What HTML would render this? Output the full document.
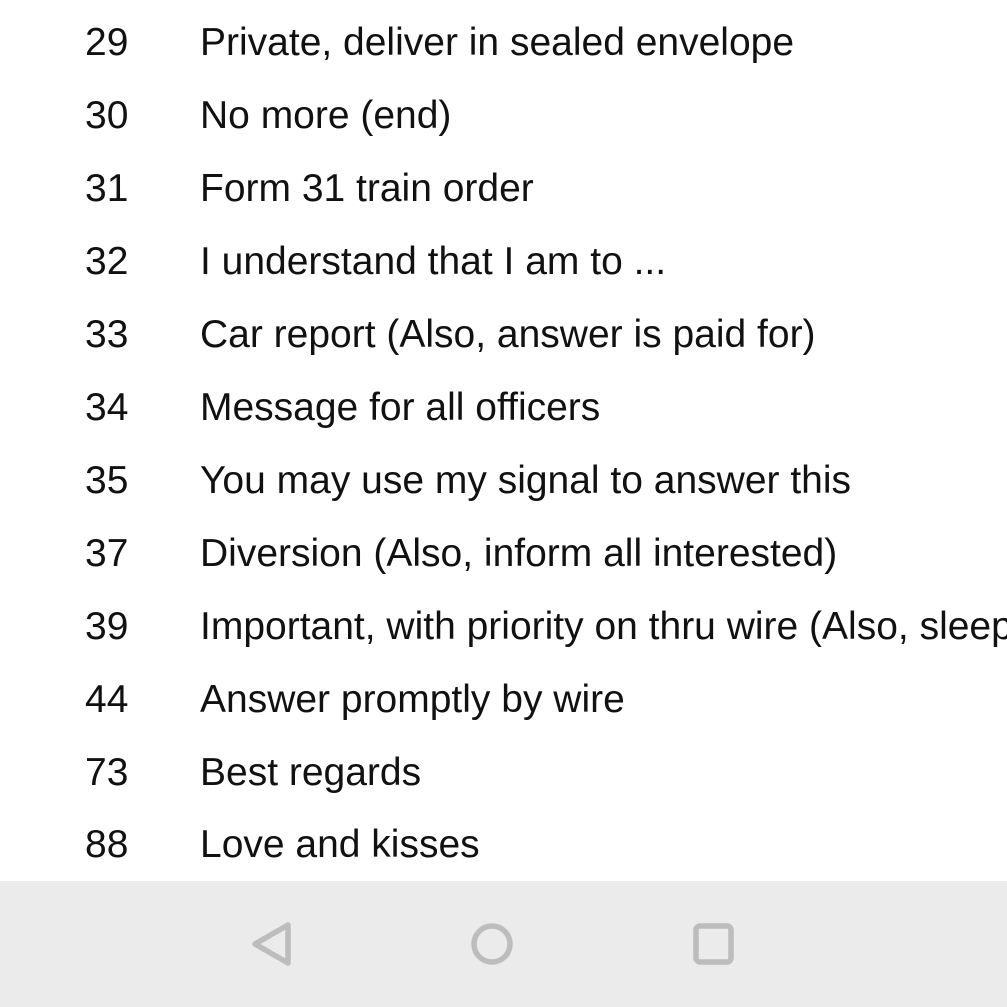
<!DOCTYPE html>
<html><head><meta charset="utf-8"><style>
html,body{margin:0;padding:0;width:1007px;height:1007px;overflow:hidden;background:#fff;font-family:"Liberation Sans",Roboto,sans-serif;color:#111;}
.r{position:absolute;left:0;font-size:39px;line-height:1;white-space:nowrap;}
.n{position:absolute;left:85px;}
.t{position:absolute;left:200px;}
.nav{position:absolute;left:0;top:881px;width:1007px;height:126px;background:#ebebeb;}
</style></head><body>
<div class="r" style="top:23px"><span class="n">29</span><span class="t">Private, deliver in sealed envelope</span></div>
<div class="r" style="top:96px"><span class="n">30</span><span class="t">No more (end)</span></div>
<div class="r" style="top:169px"><span class="n">31</span><span class="t">Form 31 train order</span></div>
<div class="r" style="top:242px"><span class="n">32</span><span class="t">I understand that I am to ...</span></div>
<div class="r" style="top:315px"><span class="n">33</span><span class="t">Car report (Also, answer is paid for)</span></div>
<div class="r" style="top:388px"><span class="n">34</span><span class="t">Message for all officers</span></div>
<div class="r" style="top:461px"><span class="n">35</span><span class="t">You may use my signal to answer this</span></div>
<div class="r" style="top:534px"><span class="n">37</span><span class="t">Diversion (Also, inform all interested)</span></div>
<div class="r" style="top:607px"><span class="n">39</span><span class="t">Important, with priority on thru wire (Also, sleep)</span></div>
<div class="r" style="top:680px"><span class="n">44</span><span class="t">Answer promptly by wire</span></div>
<div class="r" style="top:753px"><span class="n">73</span><span class="t">Best regards</span></div>
<div class="r" style="top:825px"><span class="n">88</span><span class="t">Love and kisses</span></div>
<div class="nav">
<svg width="1007" height="126" viewBox="0 0 1007 126" style="position:absolute;left:0;top:0">
<g fill="none" stroke="#bdbdbd" stroke-width="5.5" stroke-linejoin="round">
<path d="M288 44 L288 82 L255 63 Z"/>
<circle cx="492" cy="63" r="18"/>
<rect x="696" y="45" width="35" height="36" rx="4"/>
</g></svg>
</div>
</body></html>
